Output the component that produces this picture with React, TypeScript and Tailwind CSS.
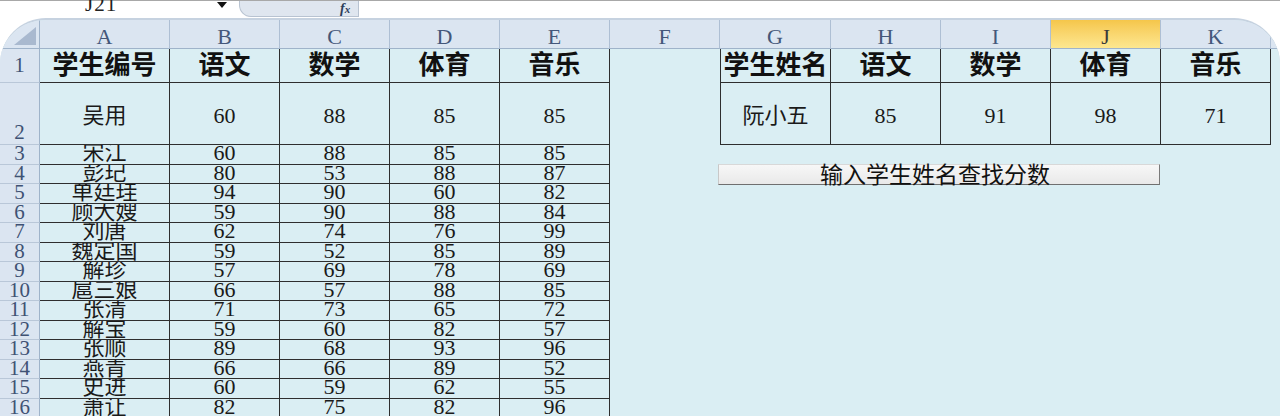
import React from 'react';

const cols = ['A', 'B', 'C', 'D', 'E', 'F', 'G', 'H', 'I', 'J', 'K'];
const widths = ['w-[130px]', 'w-[110px]', 'w-[110px]', 'w-[110px]', 'w-[110px]', 'w-[110px]', 'w-[111px]', 'w-[110px]', 'w-[110px]', 'w-[110px]', 'w-[110px]'];

const subjects = ['语文', '数学', '体育', '音乐'];

const students: [string, number, number, number, number][] = [
    ['宋江', 60, 88, 85, 85],
    ['彭玘', 80, 53, 88, 87],
    ['单廷珪', 94, 90, 60, 82],
    ['顾大嫂', 59, 90, 88, 84],
    ['刘唐', 62, 74, 76, 99],
    ['魏定国', 59, 52, 85, 89],
    ['解珍', 57, 69, 78, 69],
    ['扈三娘', 66, 57, 88, 85],
    ['张清', 71, 73, 65, 72],
    ['解宝', 59, 60, 82, 57],
    ['张顺', 89, 68, 93, 96],
    ['燕青', 66, 66, 89, 52],
    ['史进', 60, 59, 62, 55],
    ['萧让', 82, 75, 82, 96],
];

const serif = "font-['Liberation_Serif','Noto_Sans_CJK_SC',serif]";

// border for a cell at column index c, sheet row r (1-based)
const cellBorder = (c: number, r: number) => {
    if (c <= 4) return 'border-r border-b border-[#2e2e2e]';
    if (c >= 6 && r <= 2) {
        return c === 6 ? 'border-l border-r border-b border-[#2e2e2e]' : 'border-r border-b border-[#2e2e2e]';
    }
    return '';
};

const RowHead = ({ n, className }: { n: number; className: string }) => (
    <div className={`w-[40px] shrink-0 flex justify-center overflow-hidden bg-[#dbe5f1] border-r border-b border-r-[#9fb3ca] border-b-[#b9c7d8] text-[#3f5274] ${className}`}>
        {n}
    </div>
);

const App = () => {
    return (
        <div className={`w-[1280px] h-[416px] overflow-hidden bg-white ${serif}`}>
            {/* formula bar strip */}
            <div className="relative h-[18px] border-t border-[#a8a8a8] flex items-start">
                <div className="w-[85px]" />
                <div className="text-[21px] leading-[14px] -mt-[4px] text-[#222] tracking-[1px]">J21</div>
                <div className="w-[100px]" />
                <div className="w-0 h-0 border-l-[5px] border-r-[5px] border-t-[6px] border-l-transparent border-r-transparent border-t-[#111] mt-[1px]" />
                <div className="w-[12px]" />
                <div className="w-[120px] h-[16px] bg-[#dfe6ef] border-b border-l border-r border-[#b8c3d1] rounded-bl-[12px] flex justify-end items-center pr-[8px]">
                    <span className="italic font-bold text-[14px] leading-none text-[#2c3d5a]">
                        f<span className="text-[11px]">x</span>
                    </span>
                </div>
            </div>

            {/* sheet */}
            <div className="relative h-[398px] bg-[#daeef3] rounded-t-[46px] overflow-hidden border-t-2 border-[#c6d2e0]">
                {/* column headers */}
                <div className="flex h-[29px]">
                    <div className="w-[40px] shrink-0 bg-[#dbe5f1] border-r border-b border-[#9fb3ca] flex items-end justify-end pr-[3px] pb-[3px]">
                        <svg width="22" height="18" viewBox="0 0 22 18">
                            <polygon points="22,0 22,18 0,18" fill="#a9b9cf" />
                        </svg>
                    </div>
                    {cols.map((c, i) => (
                        <div
                            key={c}
                            className={`${widths[i]} shrink-0 flex justify-center pt-[6px] text-[22px] leading-none border-r border-b border-r-[#aebfd4] border-b-[#9fb3ca] ${c === 'J' ? 'bg-gradient-to-b from-[#f5c64a] to-[#fde78f] text-[#3a3a3a]' : 'bg-[#dbe5f1] text-[#44577a]'}`}
                        >
                            {c}
                        </div>
                    ))}
                    <div className="flex-1 bg-[#dbe5f1] border-b border-[#9fb3ca]" />
                </div>

                {/* row 1 */}
                <div className="flex h-[34px]">
                    <RowHead n={1} className="items-center text-[21px] leading-none" />
                    {cols.map((c, i) => {
                        let txt = '';
                        if (i === 0) txt = '学生编号';
                        else if (i >= 1 && i <= 4) txt = subjects[i - 1];
                        else if (i === 6) txt = '学生姓名';
                        else if (i >= 7) txt = subjects[i - 7];
                        return (
                            <div
                                key={c}
                                className={`${widths[i]} shrink-0 flex items-center justify-center text-[26px] leading-none font-bold text-[#111] ${cellBorder(i, 1)}`}
                            >
                                {txt}
                            </div>
                        );
                    })}
                </div>

                {/* row 2 */}
                <div className="flex h-[62px]">
                    <RowHead n={2} className="items-end text-[21px] leading-[20px] pb-[2px]" />
                    {cols.map((c, i) => {
                        const left: (string | number)[] = ['吴用', 60, 88, 85, 85];
                        const right: (string | number)[] = ['阮小五', 85, 91, 98, 71];
                        let txt: string | number = '';
                        if (i <= 4) txt = left[i];
                        else if (i >= 6) txt = right[i - 6];
                        return (
                            <div
                                key={c}
                                className={`${widths[i]} shrink-0 flex items-center justify-center pt-[5px] text-[22px] leading-none text-[#1a1a1a] ${cellBorder(i, 2)}`}
                            >
                                {txt}
                            </div>
                        );
                    })}
                </div>

                {/* rows 3-16 */}
                {students.map((s, ri) => (
                    <div key={ri} className="flex h-[19.5px]">
                        <RowHead n={ri + 3} className="items-start text-[21px] leading-[16px]" />
                        {cols.map((c, i) => (
                            <div
                                key={c}
                                className={`${widths[i]} shrink-0 flex items-start justify-center overflow-hidden text-[22px] leading-[16px] text-[#1a1a1a] ${cellBorder(i, ri + 3)}`}
                            >
                                {i <= 4 ? s[i] : ''}
                            </div>
                        ))}
                    </div>
                ))}

                {/* form button floating over the sheet */}
                <div className="absolute left-[718px] top-[144px] w-[442px] h-[21px] bg-gradient-to-b from-[#f7f7f7] to-[#e9e9e9] border border-t-[#d8d8d8] border-l-[#c8c8c8] border-r-[#7a7a7a] border-b-[#6f6f6f] flex justify-center items-start">
                    <span className="text-[23px] leading-[22px] text-[#111] -ml-[8px]">输入学生姓名查找分数</span>
                </div>
            </div>
        </div>
    );
};

export default App;
